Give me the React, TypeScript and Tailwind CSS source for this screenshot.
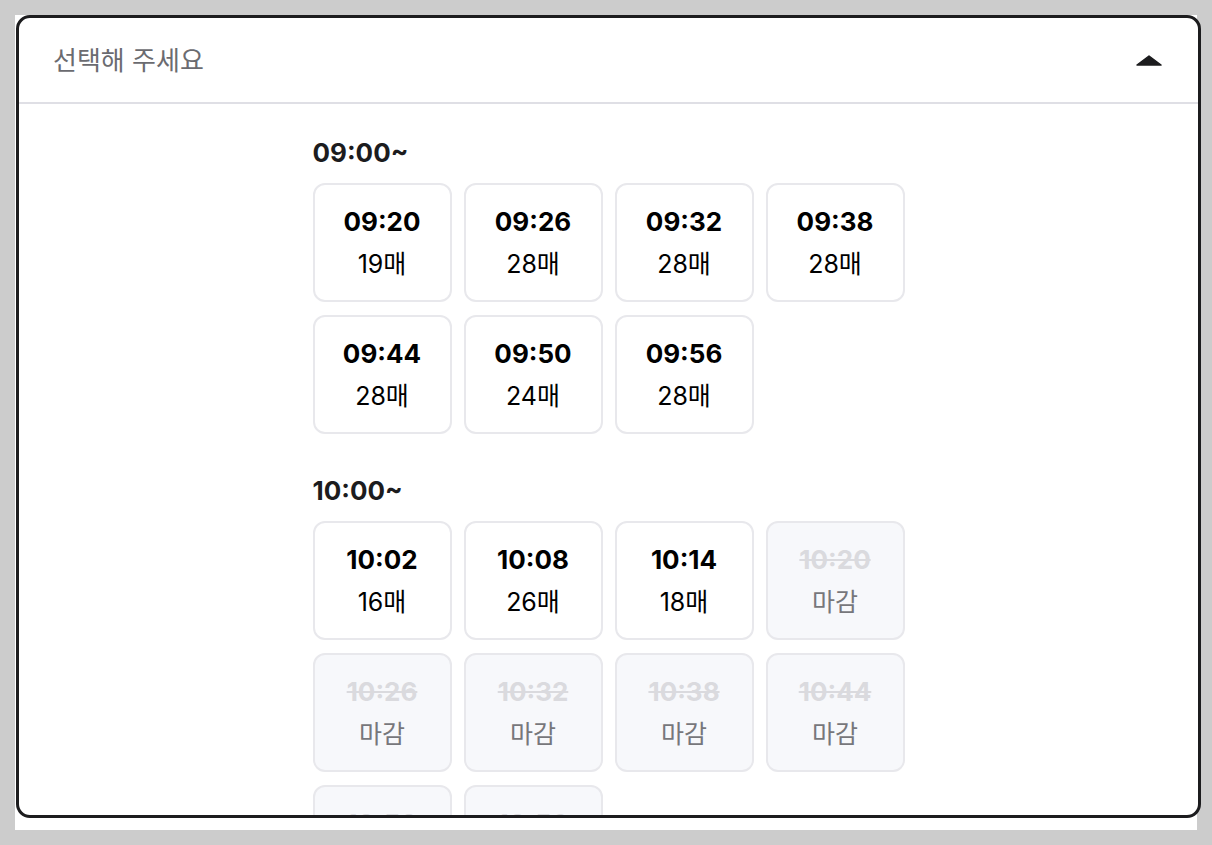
import React from 'react';

interface Slot {
  time: string;
  seats: number | null;
}

const sections: { label: string; slots: Slot[] }[] = [
  {
    label: '09:00~',
    slots: [
      { time: '09:20', seats: 19 },
      { time: '09:26', seats: 28 },
      { time: '09:32', seats: 28 },
      { time: '09:38', seats: 28 },
      { time: '09:44', seats: 28 },
      { time: '09:50', seats: 24 },
      { time: '09:56', seats: 28 },
    ],
  },
  {
    label: '10:00~',
    slots: [
      { time: '10:02', seats: 16 },
      { time: '10:08', seats: 26 },
      { time: '10:14', seats: 18 },
      { time: '10:20', seats: null },
      { time: '10:26', seats: null },
      { time: '10:32', seats: null },
      { time: '10:38', seats: null },
      { time: '10:44', seats: null },
      { time: '10:50', seats: null },
      { time: '10:56', seats: null },
    ],
  },
];

const font = { fontFamily: 'Inter, "Noto Sans CJK KR", sans-serif' };

const SlotCard: React.FC<{ slot: Slot }> = ({ slot }) => {
  const closed = slot.seats === null;
  return (
    <button
      type="button"
      className={
        closed
          ? 'h-[119px] rounded-[12px] border-2 border-[#e8e8ec] bg-[#f7f8fb] flex flex-col items-center justify-center'
          : 'h-[119px] rounded-[12px] border-2 border-[#e8e8ec] bg-white flex flex-col items-center justify-center'
      }
    >
      <span
        className={
          closed
            ? 'text-[26px] leading-[42px] font-bold text-[#dadade] line-through'
            : 'text-[26px] leading-[42px] font-bold text-black'
        }
      >
        {slot.time}
      </span>
      <span className={closed ? 'text-[25px] leading-[42px] text-[#77777b]' : 'text-[25px] leading-[42px] text-black'}>
        {closed ? '마감' : `${slot.seats}매`}
      </span>
    </button>
  );
};

const App: React.FC = () => {
  return (
    <div className="w-[1212px] h-[845px] bg-[#cccccc] pt-[15px] pl-[15px]" style={font}>
      <div className="w-[1182px] h-[815px] bg-white">
        <div className="ml-[1px] w-[1185px] h-[803px] border-[3px] border-[#1c1c1e] rounded-[14px] overflow-hidden bg-white flex flex-col">
          <div className="h-[86px] shrink-0 flex items-center justify-between pl-[34px] pr-[36px] border-b-2 border-[#dfdfe5]">
            <span className="text-[26px] leading-[36px] pt-[2px] text-[#6b6b70]">선택해 주세요</span>
            <svg width="26" height="11" viewBox="0 0 26 11">
              <path d="M13 1 L25 10 H1 Z" fill="#1c1c1e" stroke="#1c1c1e" strokeWidth="1.5" strokeLinejoin="round" />
            </svg>
          </div>
          <div className="w-[592px] mx-auto pt-[33px]">
            {sections.map((s, i) => (
              <div key={s.label} className={i > 0 ? 'mt-[41px]' : ''}>
                <div className="text-[26px] leading-[32px] font-bold text-[#1c1c1e] mb-[14px]">{s.label}</div>
                <div className="grid grid-cols-4 gap-x-[12px] gap-y-[13px]">
                  {s.slots.map((slot) => (
                    <SlotCard key={slot.time} slot={slot} />
                  ))}
                </div>
              </div>
            ))}
          </div>
        </div>
      </div>
    </div>
  );
};

export default App;
